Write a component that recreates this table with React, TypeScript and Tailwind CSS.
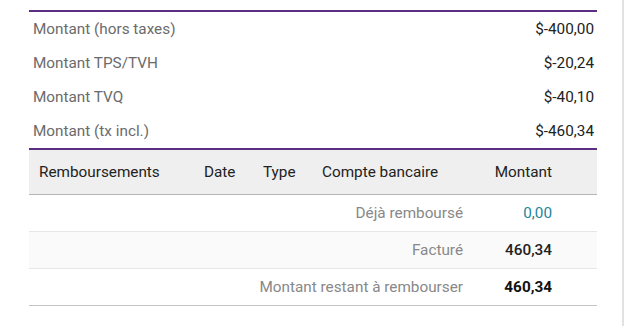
const totals = [
  { label: "Montant (hors taxes)", value: "$-400,00" },
  { label: "Montant TPS/TVH", value: "$-20,24" },
  { label: "Montant TVQ", value: "$-40,10" },
  { label: "Montant (tx incl.)", value: "$-460,34" },
];

const cols = "grid grid-cols-[165px_59px_59px_161px_89px_1fr]";

export default function App() {
  return (
    <div className="flex h-[326px] w-[629px] bg-white font-['Roboto',sans-serif] text-[15.3px]">
      <div className="w-[624px] border-r-2 border-[#e2e2e2] pl-[29px] pr-[25px] pt-[10px]">
        {/* Totaux */}
        <div className="border-y-2 border-[#5c2d84]">
          {totals.map((t) => (
            <div key={t.label} className="flex h-[34px] items-center justify-between pl-[4px] pr-[3px]">
              <span className="text-[#6b6b6b]">{t.label}</span>
              <span className="text-[#222]">{t.value}</span>
            </div>
          ))}
        </div>

        {/* Remboursements */}
        <div className={`${cols} h-[45px] items-center border-b border-[#b5b5b5] bg-[#efefef] text-[#222]`}>
          <span className="pl-[10px]">Remboursements</span>
          <span className="pl-[10px]">Date</span>
          <span className="pl-[10px]">Type</span>
          <span className="pl-[10px]">Compte bancaire</span>
          <span className="pr-[10px] text-right">Montant</span>
          <span />
        </div>
        <div className={`${cols} h-[37px] items-center border-b border-[#e6e6e6]`}>
          <span className="col-span-4 pr-[10px] text-right text-[#888]">Déjà remboursé</span>
          <span className="pr-[10px] text-right text-[#23869b]">0,00</span>
          <span />
        </div>
        <div className={`${cols} h-[37px] items-center border-b border-[#e6e6e6] bg-[#fafafa]`}>
          <span className="col-span-4 pr-[10px] text-right text-[#888]">Facturé</span>
          <span className="pr-[10px] text-right font-medium text-[#222]">460,34</span>
          <span />
        </div>
        <div className={`${cols} h-[37px] items-center border-b border-[#c4c4c4]`}>
          <span className="col-span-4 pr-[10px] text-right text-[#888]">Montant restant à rembourser</span>
          <span className="pr-[10px] text-right font-bold text-[#111]">460,34</span>
          <span />
        </div>
      </div>
    </div>
  );
}
